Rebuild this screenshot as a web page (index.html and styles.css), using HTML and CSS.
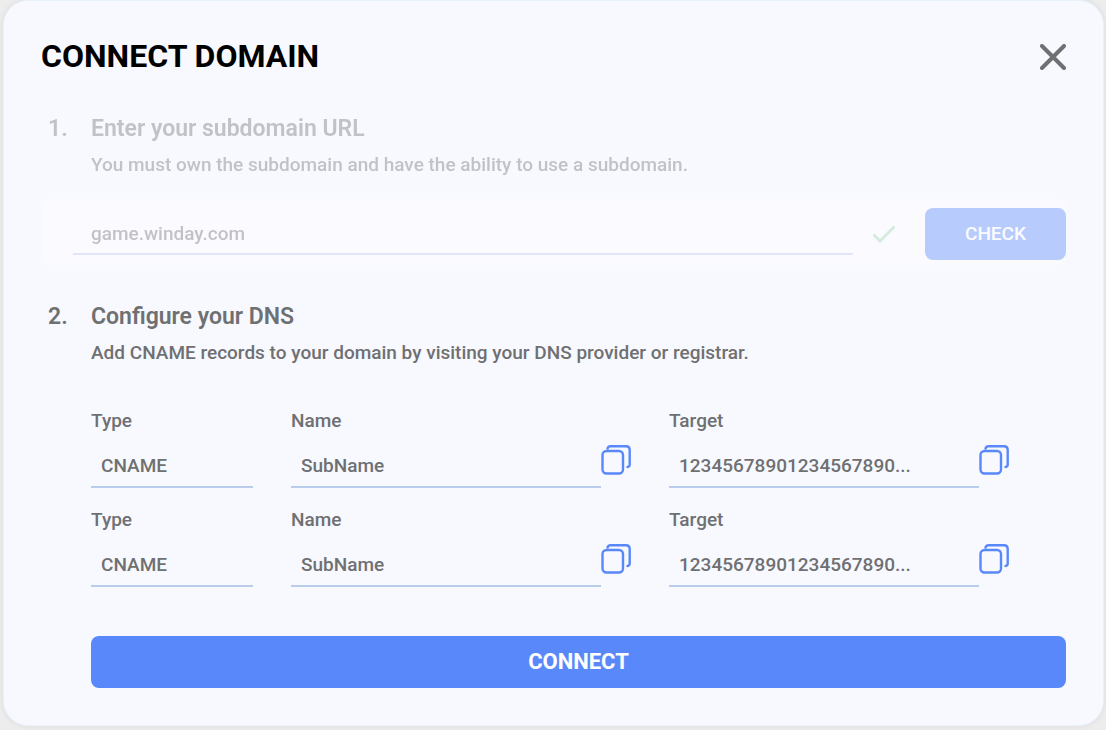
FILE: index.html
```html
<!DOCTYPE html>
<html lang="en">
<head>
<meta charset="UTF-8">
<meta name="viewport" content="width=device-width, initial-scale=1.0">
<title>Connect Domain</title>
<link rel="stylesheet" href="styles.css">
</head>
<body>

<svg class="sprite" aria-hidden="true">
  <symbol id="copyIcon" viewBox="0 0 30 30">
    <rect x="1.500" y="6" width="20.500" height="22.500" rx="4"/>
    <path d="M6.500 3.500C7 2 8 1.300 9.500 1.300H25C27.500 1.300 28.700 2.500 28.700 5V19.500C28.700 21 28 21.800 26.500 22"/>
  </symbol>
</svg>

<form class="modal" id="domainForm">
  <div class="modal-header">
    <h1>CONNECT DOMAIN</h1>
    <button type="button" class="close" aria-label="Close">
      <svg viewBox="0 0 26 26"><path d="M2 2L24 24M24 2L2 24"/></svg>
    </button>
  </div>

  <section class="step done">
    <h2><span class="number">1.</span><label for="subdomain">Enter your subdomain URL</label></h2>
    <p>You must own the subdomain and have the ability to use a subdomain.</p>
    <div class="url-row">
      <input type="text" id="subdomain" value="game.winday.com">
      <svg class="tick" viewBox="0 0 24 18"><path d="M1.500 9.500L8 16L22.500 1.500"/></svg>
      <button type="button" class="check">CHECK</button>
    </div>
  </section>

  <section class="step">
    <h2><span class="number">2.</span>Configure your DNS</h2>
    <p>Add CNAME records to your domain by visiting your DNS provider or registrar.</p>
    <div class="records">
      <div class="record">
        <div class="field">
          <label for="type1">Type</label>
          <input type="text" id="type1" value="CNAME" readonly>
        </div>
        <div class="field">
          <label for="name1">Name</label>
          <div class="copy-row">
            <input type="text" id="name1" value="SubName" readonly>
            <button type="button" class="copy" aria-label="Copy name"><svg><use href="#copyIcon"/></svg></button>
          </div>
        </div>
        <div class="field">
          <label for="target1">Target</label>
          <div class="copy-row">
            <input type="text" id="target1" value="12345678901234567890..." readonly>
            <button type="button" class="copy" aria-label="Copy target"><svg><use href="#copyIcon"/></svg></button>
          </div>
        </div>
      </div>
      <div class="record">
        <div class="field">
          <label for="type2">Type</label>
          <input type="text" id="type2" value="CNAME" readonly>
        </div>
        <div class="field">
          <label for="name2">Name</label>
          <div class="copy-row">
            <input type="text" id="name2" value="SubName" readonly>
            <button type="button" class="copy" aria-label="Copy name"><svg><use href="#copyIcon"/></svg></button>
          </div>
        </div>
        <div class="field">
          <label for="target2">Target</label>
          <div class="copy-row">
            <input type="text" id="target2" value="12345678901234567890..." readonly>
            <button type="button" class="copy" aria-label="Copy target"><svg><use href="#copyIcon"/></svg></button>
          </div>
        </div>
      </div>
    </div>
  </section>

  <button type="submit" class="connect">CONNECT</button>
</form>

</body>
</html>
```
FILE: styles.css
```css
* {
  box-sizing: border-box;
}
body {
  margin: 0;
  padding: 0 2px 4px 3px;
  background-color: #ededed;
  color: #6f7072;
  font-family: Roboto, Arial, sans-serif;
  font-size: 19px;
  font-weight: 500;
  line-height: 24px;
}
input, button {
  font: inherit;
  color: inherit;
}
button {
  padding: 0;
  border: none;
  background: none;
  cursor: pointer;
}
.sprite {
  display: none;
}
.modal {
  padding: 35px 37px 37px;
  background-color: #f8f9ff;
  border: 1px solid #e8f2fc;
  border-radius: 25px;
  box-shadow: 0 0 6px rgba(0, 0, 0, 0.08);
}
.modal-header {
  display: flex;
  justify-content: space-between;
  align-items: flex-start;
  margin-bottom: 39px;
}
h1 {
  margin: 0;
  color: #000;
  font-size: 32px;
  font-weight: 700;
  line-height: 40px;
}
.close {
  width: 26px;
  height: 26px;
  margin-top: 8px;
}
.close svg {
  display: block;
  width: 26px;
  height: 26px;
  fill: none;
  stroke: #6f7072;
  stroke-width: 4;
  stroke-linecap: round;
}
.step {
  margin-bottom: 38px;
}
.step.done {
  opacity: 0.4;
}
h2 {
  display: flex;
  margin: 0 0 10px;
  font-size: 23px;
  font-weight: 600;
  line-height: 28px;
}
.number {
  width: 50px;
  padding-left: 7px;
}
.step p {
  margin: 0 0 22px 50px;
}
.url-row {
  display: flex;
  align-items: center;
  height: 66px;
  padding: 4px 0 0 32px;
  background-color: #fff;
  border-radius: 8px;
}
input {
  width: 100%;
  min-width: 0;
  height: 44px;
  padding: 0 10px;
  background: none;
  border: none;
  border-bottom: 2px solid #b9cdea;
  border-radius: 0;
  outline: none;
}
.url-row input {
  flex: 1;
  height: 42px;
  padding: 0 18px;
}
.tick {
  width: 24px;
  height: 18px;
  margin: 0 29px 0 19px;
  fill: none;
  stroke: #a0d8ac;
  stroke-width: 3;
}
.check, .connect {
  height: 52px;
  background-color: #5888f9;
  border-radius: 8px;
  color: #fff;
}
.check {
  width: 141px;
}
.records {
  display: flex;
  flex-direction: column;
  gap: 20px;
  margin-top: 44px;
  padding: 0 57px 0 50px;
}
.record {
  display: grid;
  grid-template-columns: 162fr 340fr 340fr;
  gap: 38px;
}
.field > label {
  display: block;
  margin-bottom: 11px;
}
.copy-row {
  display: flex;
  align-items: flex-start;
}
.copy {
  margin-top: 1px;
}
.copy svg {
  display: block;
  width: 30px;
  height: 30px;
  fill: none;
  stroke: #5888f9;
  stroke-width: 2.4;
  stroke-linecap: round;
}
.connect {
  display: block;
  width: calc(100% - 50px);
  margin: 49px 0 0 50px;
  font-size: 22px;
  font-weight: 700;
}
```
